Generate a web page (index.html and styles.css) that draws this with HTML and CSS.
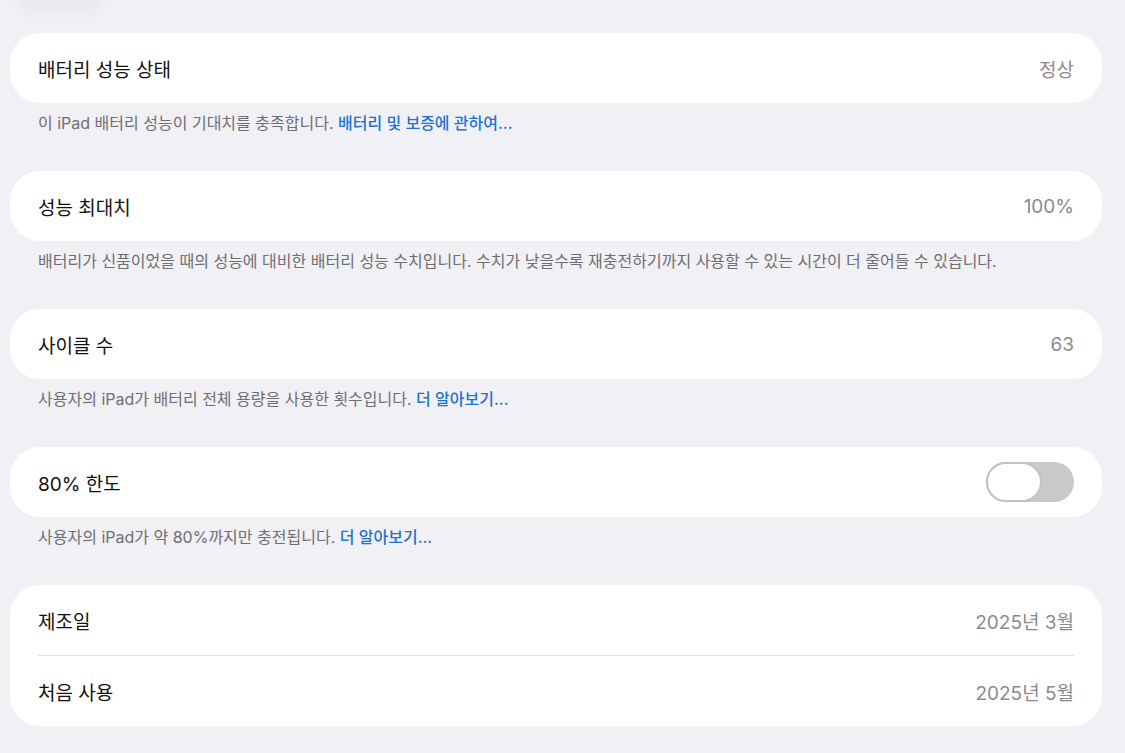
FILE: index.html
```html
<!DOCTYPE html>
<html lang="ko">

<head>
  <title>배터리</title>
  <meta charset="utf-8">
  <meta name="viewport" content="width=device-width, initial-scale=1.0">
  <link rel="stylesheet" href="styles.css">
</head>

<body>
  <div class="top-fade"></div>
  <div class="container">
    <div class="section">
      <div class="card">
        <div class="row">
          <span class="label">배터리 성능 상태</span>
          <span class="value">정상</span>
        </div>
      </div>
      <p class="footer">이 iPad 배터리 성능이 기대치를 충족합니다. <a href="#">배터리 및 보증에 관하여...</a></p>
    </div>

    <div class="section">
      <div class="card">
        <div class="row">
          <span class="label">성능 최대치</span>
          <span class="value">100%</span>
        </div>
      </div>
      <p class="footer">배터리가 신품이었을 때의 성능에 대비한 배터리 성능 수치입니다. 수치가 낮을수록 재충전하기까지 사용할 수 있는 시간이 더 줄어들 수 있습니다.</p>
    </div>

    <div class="section">
      <div class="card">
        <div class="row">
          <span class="label">사이클 수</span>
          <span class="value">63</span>
        </div>
      </div>
      <p class="footer">사용자의 iPad가 배터리 전체 용량을 사용한 횟수입니다. <a href="#">더 알아보기...</a></p>
    </div>

    <div class="section">
      <div class="card">
        <div class="row">
          <span class="label">80% 한도</span>
          <span class="toggle"><span class="knob"></span></span>
        </div>
      </div>
      <p class="footer">사용자의 iPad가 약 80%까지만 충전됩니다. <a href="#">더 알아보기...</a></p>
    </div>

    <div class="section">
      <div class="card">
        <div class="row">
          <span class="label">제조일</span>
          <span class="value">2025년 3월</span>
        </div>
        <div class="divider"></div>
        <div class="row">
          <span class="label">처음 사용</span>
          <span class="value">2025년 5월</span>
        </div>
      </div>
    </div>
  </div>
</body>

</html>
```

FILE: styles.css
```css
html,
body {
  margin: 0;
  padding: 0;
}

body {
  background: #f1f0f5;
  color: #111;
  font-family: Inter, "Noto Sans CJK KR", sans-serif;
  height: 753px;
  overflow: hidden;
}

.top-fade {
  position: absolute;
  left: 20px;
  top: -10px;
  width: 80px;
  height: 22px;
  border-radius: 10px;
  background: #e9e8ee;
  filter: blur(6px);
}

.container {
  padding: 33px 23px 0 10px;
}

.section {
  margin-bottom: 38px;
}

.section:last-child {
  margin-bottom: 0;
}

.card {
  background: #fff;
  border-radius: 30px;
}

.row {
  display: flex;
  align-items: center;
  justify-content: space-between;
  height: 70px;
  padding: 0 28px;
}

.label {
  font-size: 19px;
  color: #111;
}

.value {
  font-size: 19px;
  color: #8a8a8e;
}

.divider {
  height: 1px;
  background: #e2e2e5;
  margin: 0 28px;
}

.footer {
  margin: 0;
  padding: 10px 28px 0;
  font-size: 16px;
  line-height: 20px;
  color: #6e6e73;
}

.footer a {
  color: #1f72d4;
  text-decoration: none;
  font-weight: 500;
}

.toggle {
  display: flex;
  width: 88px;
  height: 40px;
  border-radius: 20px;
  background: #c9c9cb;
}

.knob {
  width: 52px;
  height: 36px;
  border: 2px solid #c2c2c4;
  border-radius: 20px;
  background: #fff;
}
```
